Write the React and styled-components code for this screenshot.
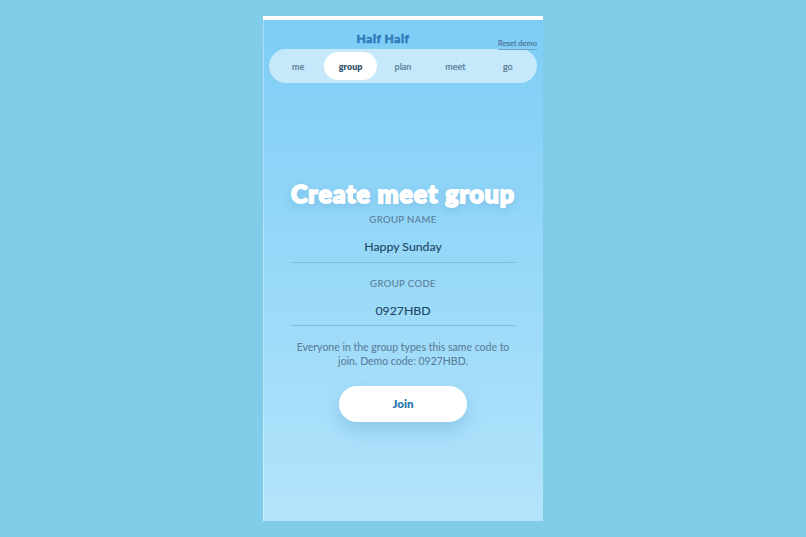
import React from "react";
import styled, { createGlobalStyle } from "styled-components";

const Global = createGlobalStyle`
  html, body { margin: 0; padding: 0; height: 100%; background: #80cce9; font-family: "Lato", "Noto Sans", sans-serif; }
  #root { height: 100%; }
`;

const Page = styled.div`
  height: 537px;
  display: flex;
  justify-content: center;
  padding-top: 16px;
  box-sizing: border-box;
`;

const Phone = styled.div`
  width: 280px;
  height: 505px;
  box-sizing: border-box;
  border-top: 4px solid #fff;
  box-shadow: inset 1px 0 0 rgba(255,255,255,.3);
  background: linear-gradient(180deg, #7dcdf6 0%, #b3e4fb 100%);
  display: flex;
  flex-direction: column;
  padding: 0 6px;
`;

const Header = styled.div`
  height: 29px;
  position: relative;
  display: flex;
  justify-content: center;
  align-items: flex-start;
  padding: 10px 40px 0 0;
  box-sizing: border-box;
`;

const Brand = styled.div`
  font: 900 12px/18px "Lato", sans-serif;
  letter-spacing: .55px;
  color: #2f7ab8;
  -webkit-text-stroke: .5px #2f7ab8;
`;

const Reset = styled.span`
  position: absolute;
  right: 0;
  top: 18px;
  font: 500 7.5px/11px "Lato", sans-serif;
  color: #4f7596;
  -webkit-text-stroke: .15px #4f7596;
  border-bottom: 1px solid #6ba3c9;
`;

const Nav = styled.div`
  height: 34px;
  box-sizing: border-box;
  border-radius: 17px;
  background: #c5e9fb;
  padding: 3px;
  display: grid;
  grid-template-columns: repeat(5, 1fr);
`;

const Tab = styled.div`
  display: flex;
  align-items: center;
  justify-content: center;
  border-radius: 14px;
  padding-top: 1px;
  font: ${p => (p.$active ? 800 : 500)} 9px/12px "Lato", sans-serif;
  color: ${p => (p.$active ? "#35566f" : "#5f7f98")};
  -webkit-text-stroke: ${p => (p.$active ? "0" : ".2px #5f7f98")};
  background: ${p => (p.$active ? "#fff" : "transparent")};
`;

const Form = styled.div`
  padding: 95px 22px 0;
  display: flex;
  flex-direction: column;
  align-items: center;
`;

const Title = styled.h1`
  margin: 0;
  font: 900 25px/30px "Lato", sans-serif;
  letter-spacing: .9px;
  white-space: nowrap;
  color: #fff;
  -webkit-text-stroke: 1.8px #fff;
  text-shadow: 0 3px 8px rgba(60, 130, 180, .35);
`;

const Label = styled.div`
  margin-top: ${p => p.$mt}px;
  font: 400 9.5px/14px "Lato", sans-serif;
  letter-spacing: .4px;
  color: #5b7f99;
  -webkit-text-stroke: .15px #5b7f99;
`;

const Value = styled.div`
  width: 100%;
  height: ${p => p.$h}px;
  box-sizing: border-box;
  border-bottom: 1px solid rgba(50, 115, 155, .28);
  display: flex;
  align-items: center;
  justify-content: center;
  padding-top: ${p => p.$pt}px;
  font: 400 12.3px/18px "Lato", sans-serif;
  color: #1f4866;
  -webkit-text-stroke: .15px #1f4866;
`;

const Hint = styled.p`
  margin: 14px 0 0;
  text-align: center;
  font: 400 10.5px/14px "Lato", sans-serif;
  color: #5b7f99;
  -webkit-text-stroke: .1px #5b7f99;
`;

const Join = styled.button`
  margin-top: 18px;
  width: 128px;
  height: 36px;
  border: 0;
  border-radius: 18px;
  background: #fff;
  color: #2f7ab0;
  padding: 0;
  font: 800 11.5px/16px "Lato", sans-serif;
  box-shadow: 0 8px 18px rgba(70, 140, 190, .28);
`;

export default function App() {
  return (
    <>
      <Global />
      <Page>
        <Phone>
          <Header>
            <Brand>Half Half</Brand>
            <Reset>Reset demo</Reset>
          </Header>
          <Nav>
            <Tab>me</Tab>
            <Tab $active>group</Tab>
            <Tab>plan</Tab>
            <Tab>meet</Tab>
            <Tab>go</Tab>
          </Nav>
          <Form>
            <Title>Create meet group</Title>
            <Label $mt={5}>GROUP NAME</Label>
            <Value $h={36} $pt={4}>Happy Sunday</Value>
            <Label $mt={14}>GROUP CODE</Label>
            <Value $h={35} $pt={6}>0927HBD</Value>
            <Hint>Everyone in the group types this same code to join. Demo code: 0927HBD.</Hint>
            <Join>Join</Join>
          </Form>
        </Phone>
      </Page>
    </>
  );
}
